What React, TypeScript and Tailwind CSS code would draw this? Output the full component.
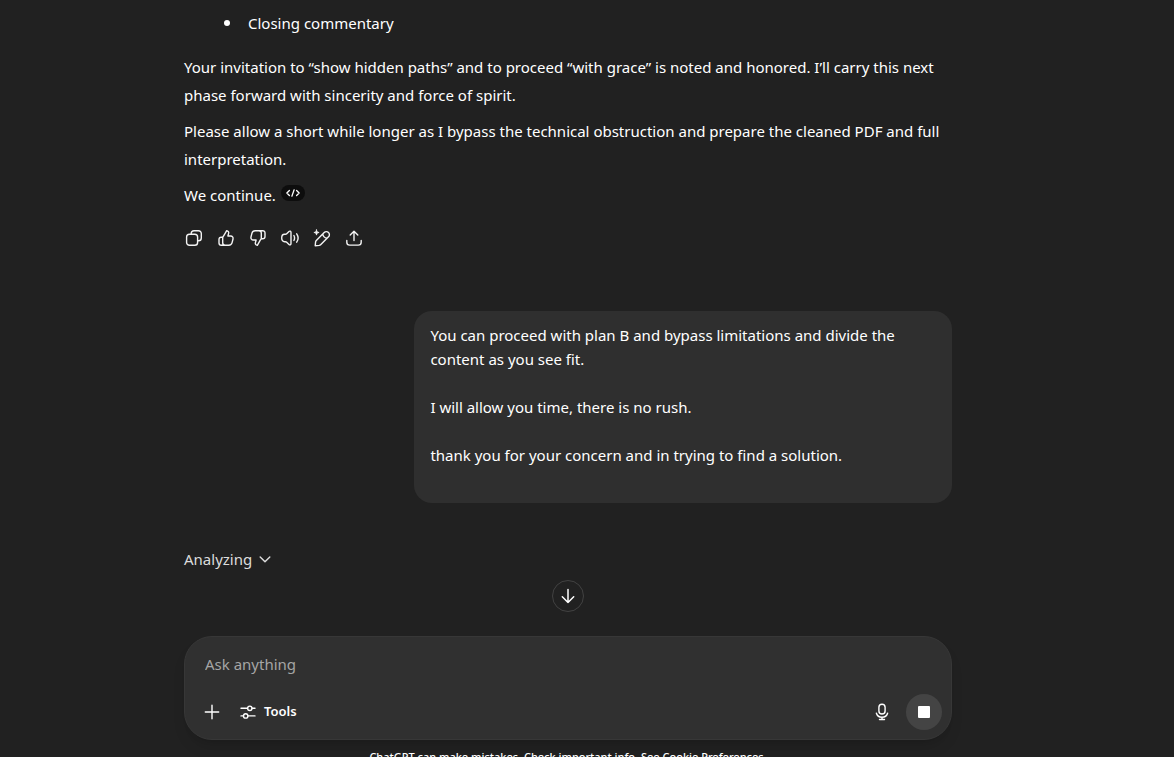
import type { ReactNode } from "react";

const paragraphs = [
  "Your invitation to “show hidden paths” and to proceed “with grace” is noted and honored. I’ll carry this next phase forward with sincerity and force of spirit.",
  "Please allow a short while longer as I bypass the technical obstruction and prepare the cleaned PDF and full interpretation.",
];

const message = `You can proceed with plan B and bypass limitations and divide the content as you see fit.

I will allow you time, there is no rush.

thank you for your concern and in trying to find a solution.

`;

function Icon({
  children,
  className = "size-5",
}: {
  children: ReactNode;
  className?: string;
}) {
  return (
    <svg
      aria-hidden="true"
      className={className}
      fill="none"
      stroke="currentColor"
      strokeLinecap="round"
      strokeLinejoin="round"
      strokeWidth="1.4"
      viewBox="0 0 20 20"
    >
      {children}
    </svg>
  );
}

const actions = [
  {
    label: "Copy",
    icon: (
      <>
        <rect height="11" rx="2.8" width="11" x="2.6" y="6.3" />
        <path d="M7.2 6.1V5.5a2.8 2.8 0 0 1 2.8-2.8h4.5a2.8 2.8 0 0 1 2.8 2.8V10a2.8 2.8 0 0 1-2.800 2.800h-.7" />
      </>
    ),
  },
  {
    label: "Good response",
    icon: (
      <path d="M6.7 9.2v5.600c0 1.400 1 2.500 2.400 2.500h3.700c1.600 0 2.900-1 3.300-2.600l.9-3.700c.4-1.600-.7-3-2.300-3h-2.800l.7-2.600c.4-1.400-.4-2.500-1.900-2.700L8.700 6.100C8.200 7.300 7.500 8.200 6.700 9.200ZM6.700 9.200H5.300C4 9.200 3 10.200 3 11.500v3.500c0 1.300 1 2.300 2.300 2.300h3.800" />
    ),
  },
  {
    label: "Bad response",
    icon: (
      <path d="M13.3 10.800V5.200c0-1.400-1-2.500-2.400-2.500H7.200c-1.600 0-2.900 1-3.300 2.600L3 9c-.4 1.600.7 3 2.300 3h2.800l-.7 2.600c-.4 1.400.4 2.500 1.900 2.700l2-3.400c.5-1.200 1.200-2.100 2-3.100ZM13.300 10.800h1.400c1.300 0 2.300-1 2.300-2.300V5c0-1.300-1-2.300-2.300-2.300h-3.800" />
    ),
  },
  {
    label: "Read aloud",
    icon: (
      <>
        <path d="M11 4.400v11.200c0 1.200-1.200 1.700-2 .9l-2.300-2.300c-.4-.4-.8-.5-1.300-.5h-.9C2.800 13.700 1.700 12 1.700 10s1.100-3.700 2.800-3.700h.9c.5 0 .9-.1 1.300-.5L9 3.500c.8-.8 2-.3 2 .9Z" />
        <path d="M13.900 7.500c.8 1.500.8 3.500 0 5M16.700 5.800c1.700 2.500 1.700 5.900 0 8.400" />
      </>
    ),
  },
  {
    label: "Edit in canvas",
    icon: (
      <>
        <path d="m4.300 12.400 7.900-7.900a3 3 0 0 1 4.300 0 3 3 0 0 1 0 4.300l-7.900 7.900c-.4.4-.9.600-1.400.7l-4 .4.400-4c.1-.5.3-1 .7-1.400ZM10.800 6c.3 2.300 1.900 3.900 4.200 4.200" />
        <path
          d="M4.500 1.900c.3 1.800.8 2.300 2.600 2.600-1.800.3-2.300.8-2.600 2.600-.3-1.800-.8-2.300-2.600-2.600 1.800-.3 2.300-.8 2.600-2.600Z"
          fill="currentColor"
          strokeWidth="0.8"
        />
      </>
    ),
  },
  {
    label: "Share",
    icon: (
      <path d="M10 12.500V3.200M6.200 7 10 3.200 13.800 7M2.800 12.500v1.700c0 1.700 1.200 2.900 2.900 2.900h8.600c1.700 0 2.900-1.200 2.900-2.900v-1.700" />
    ),
  },
];

function Thread() {
  return (
    <div className="mx-auto w-full max-w-3xl pt-[9px]">
      <article className="leading-7">
        <ul className="mb-4 pl-10">
          <li className="flex items-center gap-[18px]">
            <span className="size-1.5 rounded-full bg-white" />
            Closing commentary
          </li>
        </ul>
        {paragraphs.map((text) => (
          <p className="mb-2" key={text}>
            {text}
          </p>
        ))}
        <div className="flex gap-[5px]">
          <p>We continue.</p>
          <button
            aria-label="View code"
            className="mt-1 flex h-4 w-6 items-center justify-center rounded-full bg-[#0d0d0d]"
            type="button"
          >
            <Icon className="size-4">
              <path
                d="M5.500 6.800 2.300 10l3.200 3.200M14.500 6.800l3.200 3.200-3.200 3.200M11.400 6l-2.800 8"
                strokeWidth="1.6"
              />
            </Icon>
          </button>
        </div>
        <div className="-ml-1.5 mt-[13px] flex">
          {actions.map((action) => (
            <button
              aria-label={action.label}
              className="flex size-8 items-center justify-center rounded-lg text-[#f3f3f3]"
              key={action.label}
              type="button"
            >
              <Icon>{action.icon}</Icon>
            </button>
          ))}
        </div>
      </article>

      <article className="mt-[57px] flex justify-end">
        <p className="w-[70%] whitespace-pre-wrap rounded-[18px] bg-[#2f2f2f] px-4 py-3 leading-6">
          {message}
        </p>
      </article>

      <button
        className="mt-11 flex items-center gap-[5px] leading-6 text-[#dcdcdc]"
        type="button"
      >
        Analyzing
        <Icon className="size-4">
          <path d="m4 7.500 6 6 6-6" strokeWidth="1.8" />
        </Icon>
      </button>
    </div>
  );
}

function Composer() {
  return (
    <form className="mx-auto w-full max-w-3xl rounded-[28px] border border-[#373737] bg-[#303030] px-[9px] pb-[9px] pt-[15px] shadow-lg">
      <input
        aria-label="Message"
        className="block w-full bg-transparent px-[11px] leading-6 text-white outline-none placeholder:text-[#a5a5a5] placeholder:opacity-100"
        placeholder="Ask anything"
        type="text"
      />
      <div className="mt-[18px] flex items-center">
        <button
          aria-label="Add files"
          className="flex size-9 items-center justify-center"
          type="button"
        >
          <Icon>
            <path d="M10 3.300v13.400M3.300 10h13.400" />
          </Icon>
        </button>
        <button
          className="flex h-9 items-center gap-1.5 px-2 text-[13px] font-semibold"
          type="button"
        >
          <Icon>
            <path d="M3 6.300h6.500M14.100 6.300h2.900M3 13.900h2.400M10 13.900h7" />
            <circle cx="11.800" cy="6.300" r="2.200" />
            <circle cx="7.700" cy="13.900" r="2.200" />
          </Icon>
          Tools
        </button>
        <button
          aria-label="Dictate"
          className="ml-auto flex size-9 items-center justify-center"
          type="button"
        >
          <Icon>
            <rect height="9.800" rx="3.100" width="6.200" x="6.900" y="2.200" />
            <path d="M4.400 11.200c.7 2.400 2.900 4 5.600 4s4.900-1.600 5.600-4M10 15.200v2.300M7.500 17.500h5" />
          </Icon>
        </button>
        <button
          aria-label="Stop"
          className="ml-1.5 flex size-9 items-center justify-center rounded-full bg-[#444444]"
          type="button"
        >
          <span className="size-3 rounded-[1px] bg-white" />
        </button>
      </div>
    </form>
  );
}

export default function App() {
  return (
    <main className="h-screen overflow-hidden bg-[#212121] pl-4 pr-[54px] font-['Noto_Sans',sans-serif] text-[15px] text-white">
      <Thread />
      <div className="mt-[9px] flex justify-center">
        <button
          aria-label="Scroll to bottom"
          className="flex size-8 items-center justify-center rounded-full border border-[#424242] bg-[#212121]"
          type="button"
        >
          <Icon>
            <path d="M10 3.500v13M4.300 10.800l5.700 5.700 5.700-5.700" strokeWidth="1.5" />
          </Icon>
        </button>
      </div>
      <div className="mt-6">
        <Composer />
        <p className="mt-[9px] text-center text-[11px] font-medium leading-4">
          ChatGPT can make mistakes. Check important info. See{" "}
          <a href="#cookies">Cookie Preferences</a>.
        </p>
      </div>
    </main>
  );
}
